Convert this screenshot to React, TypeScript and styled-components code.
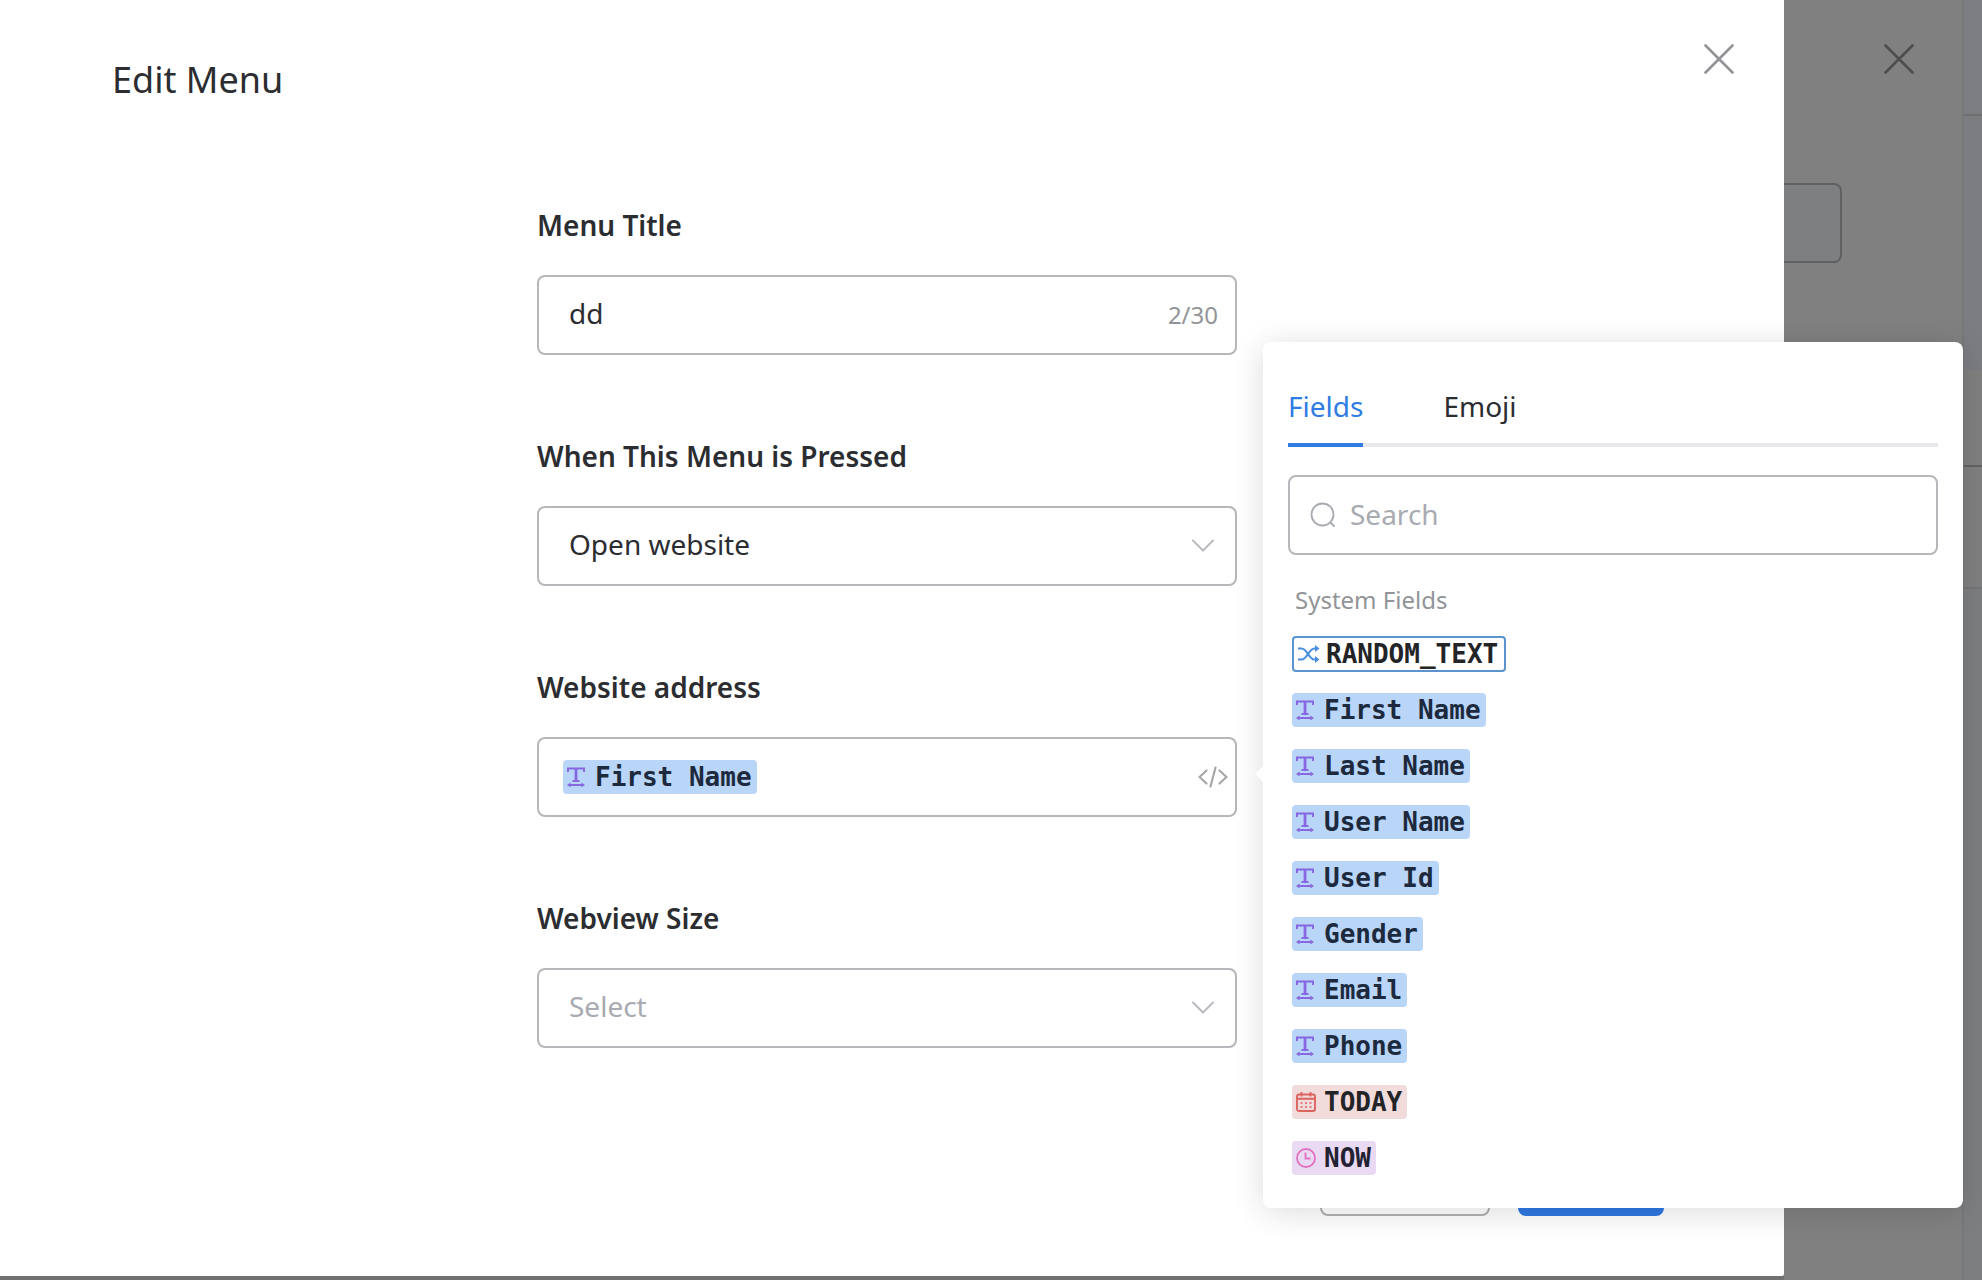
import React, { useState } from "react";
import styled, { createGlobalStyle, css } from "styled-components";

const sans = `"Noto Sans", "Open Sans", sans-serif`;
const mono = `"DejaVu Sans Mono", monospace`;

const GlobalStyle = createGlobalStyle`
  *, *::before, *::after { box-sizing: border-box; }
  body { margin: 0; background: #808080; font-family: ${sans}; color: #2b2d31; }
  button, input, select { font-family: inherit; color: inherit; margin: 0; }
`;

const Shell = styled.div`
  display: flex;
  min-height: 100vh;
  overflow: hidden;
  background: #7d7e80;
`;

const DrawerColumn = styled.div`
  flex: 1;
  min-width: 0;
  display: flex;
  padding-bottom: 4px;
  background: #707173;
  position: relative;
  z-index: 1;
`;

const Drawer = styled.section`
  flex: 1;
  display: flex;
  flex-direction: column;
  padding: 56px 120px 60px 110px;
  background: #fff;
  border-radius: 0 0 2px 0;
  position: relative;
`;

const Title = styled.h1`
  margin: 0;
  padding-left: 2px;
  font-size: 36px;
  line-height: 48px;
  font-weight: 400;
`;

const IconButton = styled.button`
  display: flex;
  padding: 0;
  border: 0;
  background: none;
  cursor: pointer;
`;

const CloseButton = styled(IconButton)<{ $dimmed?: boolean }>`
  position: absolute;
  top: 44px;
  right: ${(p) => (p.$dimmed ? 48 : 50)}px;
  color: ${(p) => (p.$dimmed ? "#4c4d4f" : "#929396")};
`;

const Form = styled.form`
  width: 100%;
  max-width: 700px;
  margin: 101px auto 0;
  display: flex;
  flex-direction: column;
  gap: 81px;
`;

const FormItem = styled.div`
  display: flex;
  flex-direction: column;
  gap: 30px;
`;

const Label = styled.label`
  font-size: 28px;
  line-height: 40px;
  font-weight: 600;
`;

const Field = styled.div<{ $tight?: boolean }>`
  position: relative;
  display: flex;
  align-items: center;
  height: 80px;
  padding: 0 ${(p) => (p.$tight ? 7 : 17)}px 0 ${(p) => (p.$tight ? 24 : 30)}px;
  border: 2px solid #b5b7ba;
  border-radius: 8px;
  background: #fff;
`;

const inputText = css`
  flex: 1;
  min-width: 0;
  height: 76px;
  padding: 0 0 5px;
  border: 0;
  outline: 0;
  background: none;
  font-size: 28px;
`;

const TextInput = styled.input`
  ${inputText}
  &::placeholder { color: #a8abb2; opacity: 1; }
`;

const SearchInput = styled(TextInput)`
  padding-bottom: 3px;
`;

const Select = styled.select<{ $empty?: boolean }>`
  ${inputText}
  appearance: none;
  color: ${(p) => (p.$empty ? "#a8abb2" : "#2b2d31")};
`;

const Chevron = styled.svg`
  margin-right: 4px;
  pointer-events: none;
`;

const Counter = styled.span`
  font-size: 24px;
  line-height: 32px;
  color: #929498;
`;

const Footer = styled.footer`
  margin-top: auto;
  display: flex;
  justify-content: flex-end;
  gap: 28px;
`;

const ActionButton = styled.button<{ $primary?: boolean }>`
  width: ${(p) => (p.$primary ? 146 : 170)}px;
  height: 80px;
  border: 2px solid ${(p) => (p.$primary ? "#2f78e4" : "#b0b1b3")};
  border-radius: 8px;
  background: ${(p) => (p.$primary ? "#2f78e4" : "#fff")};
`;

const Popover = styled.aside`
  position: absolute;
  z-index: 2;
  top: -397px;
  left: calc(100% + 28px);
  width: 700px;
  padding: 44px 25px 22px;
  border-radius: 8px;
  background: #fff;
  box-shadow: 0 4px 32px rgba(0, 0, 0, 0.14);

  &::before {
    content: "";
    position: absolute;
    top: 425px;
    left: -5px;
    width: 14px;
    height: 14px;
    background: #fff;
    transform: rotate(45deg);
  }
`;

const Tabs = styled.div`
  display: flex;
  gap: 80px;
  box-shadow: inset 0 -4px #e6e8ec;
`;

const Tab = styled.button<{ $active: boolean }>`
  padding: 0 0 17px;
  border: 0;
  border-bottom: 4px solid ${(p) => (p.$active ? "#2f7ce4" : "transparent")};
  background: none;
  font-size: 28px;
  line-height: 40px;
  color: ${(p) => (p.$active ? "#2f7ce4" : "#2b2d31")};
  cursor: pointer;
`;

const SearchField = styled(Field)`
  margin-top: 28px;
  padding: 0 20px;
  gap: 14px;
`;

const GroupTitle = styled.h2`
  margin: 29px 0 10px;
  padding-left: 7px;
  font-size: 24px;
  line-height: 32px;
  font-weight: 400;
  color: #929498;
`;

const TagList = styled.ul`
  margin: 0;
  padding: 0 0 0 4px;
  list-style: none;
`;

const TagRow = styled.li`
  display: flex;
  align-items: center;
  height: 56px;
`;

type Kind = "text" | "random" | "date" | "time";

const tagFill: Record<Kind, string> = {
  text: "#b9d5f8",
  random: "#ffffff",
  date: "#f2dbdb",
  time: "#ead9f2",
};
const tagInk: Record<Kind, string> = {
  text: "#1d2a3e",
  random: "#232427",
  date: "#232427",
  time: "#232233",
};

const TagBox = styled.button<{ $kind: Kind }>`
  display: flex;
  align-items: center;
  gap: ${(p) => (p.$kind === "random" ? 6 : 8)}px;
  flex: none;
  height: ${(p) => (p.$kind === "random" ? 36 : 34)}px;
  padding: 0 ${(p) => (p.$kind === "random" ? 6 : 5)}px 0 4px;
  border: ${(p) => (p.$kind === "random" ? "2px solid #5b93cf" : "0")};
  border-radius: 4px;
  background: ${(p) => tagFill[p.$kind]};
  color: ${(p) => tagInk[p.$kind]};
  font-size: 26px;
  line-height: 34px;
  font-weight: 700;
  white-space: pre;
  cursor: pointer;
`;

const TagLabel = styled.span`
  font-family: ${mono};
`;

const BackPanel = styled.div`
  position: relative;
  width: 180px;
  padding: 183px 120px 0 0;
  background: #808080;
  border-right: 2px solid #77787a;
`;

const BackField = styled.div`
  height: 80px;
  border: 2px solid #5f6062;
  border-left: 0;
  border-radius: 0 8px 8px 0;
  background: #7e7f80;
`;

const PageStrip = styled.div`
  width: 18px;
  display: flex;
  flex-direction: column;
`;

const StripBlock = styled.div<{ $height: number; $fill: string; $line: string }>`
  height: ${(p) => p.$height}px;
  background: ${(p) => p.$fill};
  border-bottom: 2px solid ${(p) => p.$line};
`;

const CloseIcon = () => (
  <svg width="30" height="30" viewBox="0 0 30 30" fill="none" stroke="currentColor" strokeWidth="2.6" strokeLinecap="round">
    <path d="M1.5 1.5 28.5 28.5M28.5 1.5 1.5 28.5" />
  </svg>
);

const ChevronIcon = () => (
  <Chevron width="24" height="16" viewBox="0 0 24 16" fill="none" stroke="#b9bbc0" strokeWidth="2" strokeLinecap="round">
    <path d="M3 2.5 13 12.5 23 2.5" />
  </Chevron>
);

const SearchIcon = () => (
  <svg width="26" height="26" viewBox="0 0 26 26" fill="none" stroke="#a8abb2" strokeWidth="1.8" strokeLinecap="round">
    <circle cx="12.5" cy="12.5" r="11" />
    <path d="M20.5 20.5 24 24" />
  </svg>
);

const CodeIcon = () => (
  <svg width="30" height="24" viewBox="0 0 30 24" fill="none" stroke="#a6a7a9" strokeWidth="2.2" strokeLinecap="round">
    <path d="M8.5 5.5 1.5 12 8.5 18.5M21.5 5.5 28.5 12 21.5 18.5M17.5 2.5 12.5 21.5" />
  </svg>
);

const TagIcon = ({ kind }: { kind: Kind }) => {
  if (kind === "random") {
    return (
      <svg width="22" height="20" viewBox="0 0 22 20" fill="none" stroke="#4a8fdb" strokeWidth="2.2">
        <path d="M0 4.5H3.5C9.5 4.5 10.5 15.5 16.5 15.5H18M0 15.5H3.5C9.5 15.5 10.5 4.5 16.5 4.5H18" />
        <path d="M17 1 21.5 4.5 17 8ZM17 12 21.5 15.5 17 19Z" fill="#4a8fdb" stroke="none" />
      </svg>
    );
  }
  if (kind === "date") {
    return (
      <svg width="20" height="20" viewBox="0 0 20 20" fill="none" stroke="#dc6460" strokeWidth="1.9">
        <rect x="1" y="2.5" width="18" height="16.5" rx="2" />
        <path d="M1 6.8H19M5.5 0V4.5M14.5 0V4.5" />
        <path d="M4.5 11H6.5M9 11H11M13.5 11H15.5M4.5 15H6.5M9 15H11M13.5 15H15.5" strokeWidth="1.6" />
      </svg>
    );
  }
  if (kind === "time") {
    return (
      <svg width="20" height="20" viewBox="0 0 20 20" fill="none" stroke="#df72c0" strokeWidth="1.8">
        <circle cx="10" cy="10" r="9" />
        <path d="M9.5 4.5V10.5H14.5" />
      </svg>
    );
  }
  return (
    <svg width="20" height="20" viewBox="0 0 20 20" fill="none" stroke="#8868e0">
      <path d="M1 5V1.5H17V5" strokeWidth="2" />
      <path d="M9 1V14" strokeWidth="2.8" />
      <path d="M5.5 14H12.5M2 18H16" strokeWidth="1.8" />
      <path d="M3.6 15.6 0 18 3.6 20.4ZM14.4 15.6 18 18 14.4 20.4Z" fill="#8868e0" stroke="none" />
    </svg>
  );
};

const Tag = ({ kind, name }: { kind: Kind; name: string }) => (
  <TagBox type="button" $kind={kind}>
    <TagIcon kind={kind} />
    <TagLabel>{name}</TagLabel>
  </TagBox>
);

const systemFields: { kind: Kind; name: string }[] = [
  { kind: "random", name: "RANDOM_TEXT" },
  { kind: "text", name: "First Name" },
  { kind: "text", name: "Last Name" },
  { kind: "text", name: "User Name" },
  { kind: "text", name: "User Id" },
  { kind: "text", name: "Gender" },
  { kind: "text", name: "Email" },
  { kind: "text", name: "Phone" },
  { kind: "date", name: "TODAY" },
  { kind: "time", name: "NOW" },
];

const FieldPicker = () => {
  const [tab, setTab] = useState("Fields");
  return (
    <Popover>
      <Tabs role="tablist">
        {["Fields", "Emoji"].map((name) => (
          <Tab key={name} type="button" role="tab" aria-selected={tab === name} $active={tab === name} onClick={() => setTab(name)}>
            {name}
          </Tab>
        ))}
      </Tabs>
      <SearchField>
        <SearchIcon />
        <SearchInput type="text" aria-label="Search" placeholder="Search" />
      </SearchField>
      <GroupTitle>System Fields</GroupTitle>
      <TagList>
        {systemFields.map((f) => (
          <TagRow key={f.name}>
            <Tag kind={f.kind} name={f.name} />
          </TagRow>
        ))}
      </TagList>
    </Popover>
  );
};

export default function App() {
  const [title, setTitle] = useState("dd");
  return (
    <>
      <GlobalStyle />
      <Shell>
        <DrawerColumn>
          <Drawer>
            <Title>Edit Menu</Title>
            <CloseButton type="button" aria-label="Close">
              <CloseIcon />
            </CloseButton>
            <Form>
              <FormItem>
                <Label htmlFor="menu-title">Menu Title</Label>
                <Field>
                  <TextInput id="menu-title" type="text" maxLength={30} value={title} onChange={(e) => setTitle(e.target.value)} />
                  <Counter>{title.length}/30</Counter>
                </Field>
              </FormItem>
              <FormItem>
                <Label htmlFor="menu-action">When This Menu is Pressed</Label>
                <Field>
                  <Select id="menu-action" defaultValue="website">
                    <option value="website">Open website</option>
                  </Select>
                  <ChevronIcon />
                </Field>
              </FormItem>
              <FormItem>
                <Label htmlFor="website">Website address</Label>
                <Field $tight>
                  <Tag kind="text" name="First Name" />
                  <TextInput id="website" type="text" />
                  <IconButton type="button" aria-label="Insert field">
                    <CodeIcon />
                  </IconButton>
                  <FieldPicker />
                </Field>
              </FormItem>
              <FormItem>
                <Label htmlFor="webview-size">Webview Size</Label>
                <Field>
                  <Select id="webview-size" defaultValue="" $empty>
                    <option value="">Select</option>
                  </Select>
                  <ChevronIcon />
                </Field>
              </FormItem>
            </Form>
            <Footer>
              <ActionButton type="button" aria-label="Cancel" />
              <ActionButton type="button" aria-label="Save" $primary />
            </Footer>
          </Drawer>
        </DrawerColumn>
        <BackPanel>
          <BackField />
          <CloseButton type="button" aria-label="Close panel" $dimmed>
            <CloseIcon />
          </CloseButton>
        </BackPanel>
        <PageStrip>
          <StripBlock $height={116} $fill="#7d7e81" $line="#6e6f71" />
          <StripBlock $height={254} $fill="#7c7d80" $line="#7c7d80" />
          <StripBlock $height={97} $fill="#808080" $line="#626365" />
          <StripBlock $height={122} $fill="#808080" $line="#747577" />
        </PageStrip>
      </Shell>
    </>
  );
}
